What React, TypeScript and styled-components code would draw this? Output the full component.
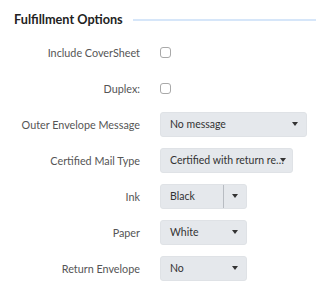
import React from "react";
import styled, { createGlobalStyle } from "styled-components";

const Global = createGlobalStyle`
  html, body { margin: 0; padding: 0; background: #fff; }
  body { font-family: "Lato", "Roboto", sans-serif; }
`;

const Panel = styled.div`
  width: 321px;
  height: 287px;
  box-sizing: border-box;
  padding: 9px 5px 0 14px;
  overflow: hidden;
`;

const Header = styled.div`
  display: flex;
  align-items: center;
  height: 20px;
  margin-bottom: 5px;
`;

const Title = styled.h2`
  margin: 0;
  font-size: 12.7px;
  font-weight: 700;
  color: #222;
  white-space: nowrap;
`;

const Rule = styled.div`
  flex: 1;
  height: 2px;
  margin-left: 10px;
  margin-top: 2px;
  background: #d6e6f9;
`;

const Form = styled.div`
  display: grid;
  grid-template-columns: 126px 1fr;
  grid-auto-rows: 36px;
  column-gap: 20px;
`;

const Label = styled.div`
  display: flex;
  align-items: center;
  justify-content: flex-end;
  font-size: 10.8px;
  color: #555;
  white-space: nowrap;
`;

const Cell = styled.div`
  display: flex;
  align-items: center;
`;

const Check = styled.span`
  display: inline-block;
  width: 9px;
  height: 9px;
  border: 1px solid #a9a9a9;
  border-radius: 3px;
  background: #fff;
`;

const Select = styled.div<{ $w: number }>`
  position: relative;
  display: flex;
  align-items: center;
  box-sizing: border-box;
  width: ${(p) => p.$w}px;
  height: 25px;
  background: #e5e8ec;
  border: 1px solid #dfe2e6;
  border-radius: 3px;
  font-size: 10.5px;
  color: #333;
`;

const Value = styled.span<{ $right: number }>`
  flex: 1;
  min-width: 0;
  padding-left: 9px;
  padding-right: ${(p) => p.$right}px;
  overflow: hidden;
  text-overflow: ellipsis;
  white-space: nowrap;
`;

const Arrow = styled.span<{ $split?: boolean }>`
  display: flex;
  align-items: center;
  justify-content: center;
  width: 22px;
  height: 100%;
  flex: none;
  border-left: ${(p) => (p.$split ? "1px solid #b8bcc2" : "none")};
  &::after {
    content: "";
    width: 0;
    height: 0;
    border-left: 3px solid transparent;
    border-right: 3px solid transparent;
    border-top: 4px solid #333;
  }
`;

const Overlay = styled(Arrow)`
  position: absolute;
  right: -2px;
  top: 0;
`;

type Row =
  | { label: string; kind: "check" }
  | { label: string; kind: "select"; value: string; w: number; split?: boolean; overlay?: boolean };

const rows: Row[] = [
  { label: "Include CoverSheet", kind: "check" },
  { label: "Duplex:", kind: "check" },
  { label: "Outer Envelope Message", kind: "select", value: "No message", w: 147 },
  { label: "Certified Mail Type", kind: "select", value: "Certified with return receipt", w: 133, overlay: true },
  { label: "Ink", kind: "select", value: "Black", w: 87, split: true },
  { label: "Paper", kind: "select", value: "White", w: 87 },
  { label: "Return Envelope", kind: "select", value: "No", w: 87 },
];

export default function App() {
  return (
    <Panel>
      <Global />
      <Header>
        <Title>Fulfillment Options</Title>
        <Rule />
      </Header>
      <Form>
        {rows.map((r) => (
          <React.Fragment key={r.label}>
            <Label>{r.label}</Label>
            <Cell>
              {r.kind === "check" ? (
                <Check />
              ) : r.overlay ? (
                <Select $w={r.w}>
                  <Value $right={5}>{r.value}</Value>
                  <Overlay />
                </Select>
              ) : (
                <Select $w={r.w}>
                  <Value $right={0}>{r.value}</Value>
                  <Arrow $split={r.split} />
                </Select>
              )}
            </Cell>
          </React.Fragment>
        ))}
      </Form>
    </Panel>
  );
}
